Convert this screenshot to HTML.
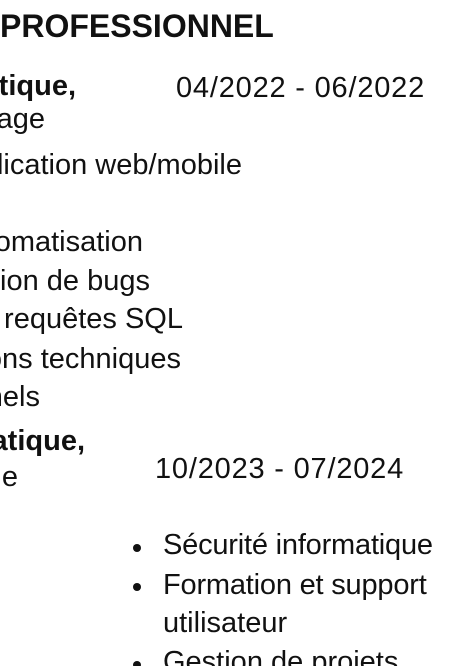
<!DOCTYPE html>
<html><head><meta charset="utf-8"><style>
html,body{margin:0;padding:0;background:#fff;width:471px;height:666px;overflow:hidden;position:relative;font-family:"Liberation Sans",sans-serif;color:#111}
.l{position:absolute;line-height:1;white-space:nowrap;font-size:29px}
.r{text-align:right}
.b{font-weight:bold}
.d{font-size:29px}
.dot{position:absolute;width:8px;height:8px;border-radius:50%;background:#111}
</style></head><body>
<div class="l b" style="left:0;top:10px;font-size:32px">PROFESSIONNEL</div>

<div class="l b r" style="right:395px;top:72px">Informatique,</div>
<div class="l d" style="left:176px;top:74px;letter-spacing:0.8px">04/2022 - 06/2022</div>
<div class="l r" style="right:426px;top:105px">Stage</div>
<div class="l r" style="right:229px;top:151px">Application web/mobile</div>
<div class="l r" style="right:328px;top:228px">Automatisation</div>
<div class="l r" style="right:321px;top:267px">Correction de bugs</div>
<div class="l r" style="right:288px;top:305px">Écriture de requêtes SQL</div>
<div class="l r" style="right:290px;top:345px">Solutions techniques</div>
<div class="l r" style="right:431px;top:383px">Fonctionnels</div>

<div class="l b r" style="right:386px;top:427px">Informatique,</div>
<div class="l r" style="right:453px;top:463px">Stage</div>
<div class="l d" style="left:155px;top:455px;letter-spacing:0.8px">10/2023 - 07/2024</div>

<div class="dot" style="left:133px;top:544px"></div>
<div class="l" style="left:163px;top:531px;letter-spacing:-0.2px">Sécurité informatique</div>
<div class="dot" style="left:133px;top:583px"></div>
<div class="l" style="left:163px;top:571px;letter-spacing:-0.2px">Formation et support</div>
<div class="l" style="left:163px;top:609px">utilisateur</div>
<div class="dot" style="left:133px;top:661px"></div>
<div class="l" style="left:163px;top:648px">Gestion de projets</div>
</body></html>
